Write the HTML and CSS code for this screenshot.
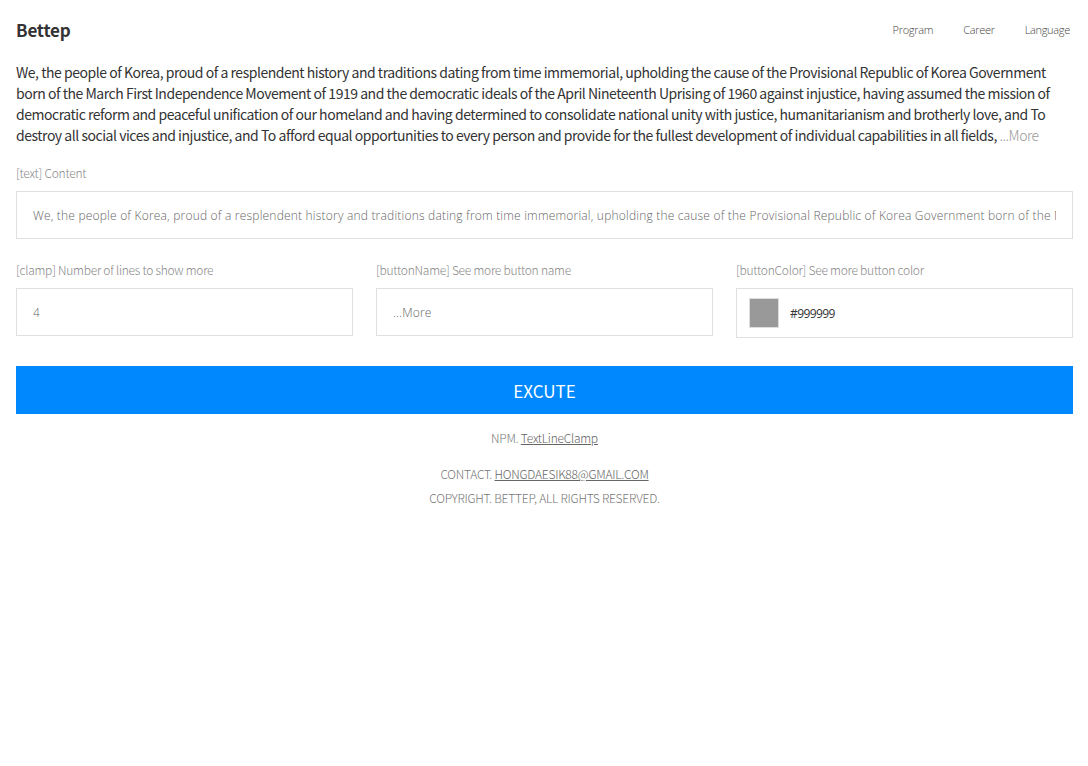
FILE: index.html
```html
<!DOCTYPE html>
<html lang="en">
<head>
<meta charset="utf-8">
<title>Bettep</title>
<link rel="stylesheet" href="styles.css">
</head>
<body>
<div class="page">
  <header class="header">
    <div class="logo">Bettep</div>
    <nav class="nav">
      <a class="nav-link">Program</a>
      <a class="nav-link">Career</a>
      <a class="nav-link">Language</a>
    </nav>
  </header>

  <p class="preview">We, the people of Korea, proud of a resplendent history and traditions dating from time immemorial, upholding the cause of the Provisional Republic of Korea Government born of the March First Independence Movement of 1919 and the democratic ideals of the April Nineteenth Uprising of 1960 against injustice, having assumed the mission of democratic reform and peaceful unification of our homeland and having determined to consolidate national unity with justice, humanitarianism and brotherly love, and To destroy all social vices and injustice, and To afford equal opportunities to every person and provide for the fullest development of individual capabilities in all fields, <span class="more">...More</span></p>

  <div class="field">
    <label class="label">[text] Content</label>
    <div class="input"><span class="input-text">We, the people of Korea, proud of a resplendent history and traditions dating from time immemorial, upholding the cause of the Provisional Republic of Korea Government born of the March First Independence Movement of 1919</span></div>
  </div>

  <div class="row">
    <div class="field">
      <label class="label">[clamp] Number of lines to show more</label>
      <div class="input"><span class="input-text">4</span></div>
    </div>
    <div class="field">
      <label class="label">[buttonName] See more button name</label>
      <div class="input"><span class="input-text">...More</span></div>
    </div>
    <div class="field">
      <label class="label">[buttonColor] See more button color</label>
      <div class="input color-input"><span class="swatch"></span><span class="color-text">#999999</span></div>
    </div>
  </div>

  <button class="execute">EXCUTE</button>

  <footer class="footer">
    <p class="npm">NPM. <a class="link">TextLineClamp</a></p>
    <p class="foot-line">CONTACT. <a class="link">HONGDAESIK88@GMAIL.COM</a></p>
    <p class="foot-line">COPYRIGHT. BETTEP, ALL RIGHTS RESERVED.</p>
  </footer>
</div>
</body>
</html>
```

FILE: styles.css
```css
* { box-sizing: border-box; }
html, body { margin: 0; padding: 0; background: #fff; }
body {
  font-family: "Noto Sans CJK KR", "Source Sans Pro", "Noto Sans", sans-serif;
  color: #333;
}
.page { padding: 0 15px 0 16px; }

.header {
  display: flex;
  align-items: center;
  justify-content: space-between;
  height: 59px;
  padding-right: 3px;
}
.logo {
  font-size: 17px;
  font-weight: 700;
  color: #333;
  letter-spacing: -0.2px;
}
.nav { display: flex; gap: 30px; }
.nav-link {
  font-family: "Open Sans", sans-serif;
  font-size: 11px;
  font-weight: 300;
  color: #444;
  letter-spacing: -0.3px;
}

.preview {
  margin: 3px 0 0;
  font-size: 14px;
  line-height: 21px;
  color: #333;
  font-weight: 400;
  letter-spacing: -0.47px;
}
.more { color: #999; font-weight: 300; }

.field { display: flex; flex-direction: column; }
.preview + .field { margin-top: 18px; }
.label {
  font-size: 12px;
  font-weight: 300;
  color: #888;
  line-height: 18px;
  margin-bottom: 9px;
  letter-spacing: -0.25px;
}
.input {
  height: 48px;
  border: 1px solid #e0e0e0;
  display: flex;
  align-items: center;
  padding: 0 16px;
  white-space: nowrap;
}
.input-text {
  display: block;
  flex: 1;
  min-width: 0;
  overflow: hidden;
  font-family: "Open Sans", sans-serif;
  font-size: 12px;
  font-weight: 300;
  color: #666;
  letter-spacing: 0.2px;
}
.row {
  display: grid;
  grid-template-columns: repeat(3, 1fr);
  gap: 23px;
  margin-top: 22px;
}
.color-input { height: 50px; padding: 0 12px; }
.swatch {
  width: 30px;
  height: 30px;
  background: #999;
  border: 1px solid #ddd;
  margin-right: 11px;
}
.color-text {
  font-family: "Open Sans", sans-serif;
  font-size: 12px;
  font-weight: 400;
  color: #333;
  letter-spacing: -0.6px;
}

.execute {
  display: block;
  width: 100%;
  height: 48px;
  margin-top: 28px;
  border: 0;
  background: #0088ff;
  color: #fff;
  font-family: "Noto Sans CJK KR", "Source Sans Pro", sans-serif;
  font-size: 17px;
  font-weight: 400;
}

.footer { text-align: center; margin-top: 12px; }
.footer p { margin: 0; font-size: 12px; font-weight: 300; color: #777; line-height: 24px; letter-spacing: -0.25px; }
.footer .npm { margin-bottom: 12px; }
.link { color: #666; text-decoration: underline; }
```
